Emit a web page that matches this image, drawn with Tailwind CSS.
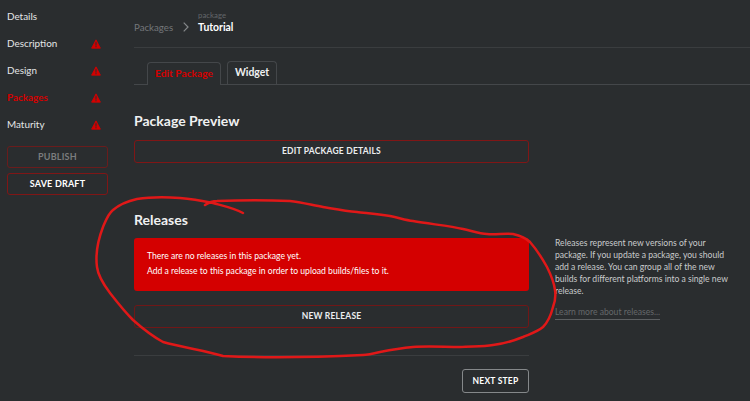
<!DOCTYPE html>
<html><head><meta charset="utf-8"><script src="https://cdn.jsdelivr.net/npm/@tailwindcss/browser@4"></script></head>
<body class="m-0 bg-[#2a2d2f]">
<div class="relative flex w-[750px] h-[401px] overflow-hidden bg-[#2a2d2f] font-['Lato',sans-serif] text-[#e4e6e7]">
  <aside class="w-[134px] shrink-0 pl-[7px] pt-[3px]">
    <div class="w-[101px]">
      <div class="h-[27px] flex items-center justify-between text-[9.9px]"><span>Details</span></div>
      <div class="h-[27px] flex items-center justify-between text-[9.9px]"><span>Description</span><svg class="w-[10px] h-[10px] mr-[7px]" viewBox="0 0 12 12"><path fill="#d40000" stroke="#d40000" stroke-linejoin="round" d="M6 1 11.3 11H.7Z"/><path fill="#2a2d2f" d="M5.3 4h1.4l-.2 4h-1ZM5.3 8.8h1.4V10H5.3Z"/></svg></div>
      <div class="h-[27px] flex items-center justify-between text-[9.9px]"><span>Design</span><svg class="w-[10px] h-[10px] mr-[7px]" viewBox="0 0 12 12"><path fill="#d40000" stroke="#d40000" stroke-linejoin="round" d="M6 1 11.3 11H.7Z"/><path fill="#2a2d2f" d="M5.3 4h1.4l-.2 4h-1ZM5.3 8.8h1.4V10H5.3Z"/></svg></div>
      <div class="h-[27px] flex items-center justify-between text-[9.9px] font-bold text-[#d40000]"><span>Packages</span><svg class="w-[10px] h-[10px] mr-[7px]" viewBox="0 0 12 12"><path fill="#d40000" stroke="#d40000" stroke-linejoin="round" d="M6 1 11.3 11H.7Z"/><path fill="#2a2d2f" d="M5.3 4h1.4l-.2 4h-1ZM5.3 8.8h1.4V10H5.3Z"/></svg></div>
      <div class="h-[27px] flex items-center justify-between text-[9.9px]"><span>Maturity</span><svg class="w-[10px] h-[10px] mr-[7px]" viewBox="0 0 12 12"><path fill="#d40000" stroke="#d40000" stroke-linejoin="round" d="M6 1 11.3 11H.7Z"/><path fill="#2a2d2f" d="M5.3 4h1.4l-.2 4h-1ZM5.3 8.8h1.4V10H5.3Z"/></svg></div>
      <button class="mt-[8px] w-full h-[22px] rounded-[3px] border border-[#6a1c1c] text-[9px] font-bold tracking-[.2px] text-[#7b7d7e]">PUBLISH</button>
      <button class="mt-[5px] w-full h-[22px] rounded-[3px] border border-[#801616] text-[9px] font-bold tracking-[.2px] text-white">SAVE DRAFT</button>
    </div>
  </aside>
  <main class="flex-1 min-w-0">
    <header class="h-[48px] border-b border-[#3a3d3f] flex items-start">
      <span class="mt-[18px] text-[9.7px] leading-[18px] text-[#74777a]">Packages</span>
      <svg class="mt-[22px] ml-[10px] w-[6px] h-[10px]" viewBox="0 0 6 10" fill="none" stroke="#85888a" stroke-width="1.2"><path d="M.7.7 5 5 .7 9.3"/></svg>
      <div class="ml-[9px] mt-[10px] flex flex-col">
        <span class="text-[7.8px] leading-[10px] text-[#63666a]">package</span>
        <span class="text-[10.4px] leading-[14px] font-bold text-white">Tutorial</span>
      </div>
    </header>
    <div class="mt-[14px] h-[23px] border-b border-[#44474a] flex pl-[13px] gap-[6px] items-end">
      <div class="relative top-[1px] h-[23px] w-[74px] rounded-t-[4px] border border-b-0 border-[#44474a] bg-[#2a2d2f] flex items-center justify-center text-[10.2px] font-bold text-[#d40000]">Edit Package</div>
      <div class="h-[23px] w-[50px] rounded-t-[4px] border border-b-0 border-[#44474a] flex items-center justify-center text-[10.4px] font-bold text-[#f0f1f2]">Widget</div>
    </div>
    <div class="flex">
      <div class="w-[395px] shrink-0">
        <h2 class="mt-[26px] h-[20px] leading-[20px] text-[14px] font-bold text-[#f0f1f2]">Package Preview</h2>
        <button class="mt-[9px] w-full h-[23px] rounded-[3px] border border-[#801616] text-[8.5px] font-bold tracking-[.2px] text-[#eceeef]">EDIT PACKAGE DETAILS</button>
        <h2 class="mt-[47px] h-[20px] leading-[20px] text-[14px] font-bold text-[#f0f1f2]">Releases</h2>
        <div class="mt-[8px] h-[53px] rounded-[3px] bg-[#d40000] px-[13px] pt-[11px] text-[8.6px] leading-[15px] text-white">
          <p>There are no releases in this package yet.</p>
          <p>Add a release to this package in order to upload builds/files to it.</p>
        </div>
        <button class="mt-[14px] w-full h-[23px] rounded-[3px] border border-[#701717] text-[8.5px] font-bold tracking-[.2px] text-[#eceeef]">NEW RELEASE</button>
        <div class="mt-[27px] border-t border-[#3a3d3f] flex justify-end pt-[13px]">
          <button class="w-[67px] h-[24px] rounded-[3px] border border-[#85888a] text-[8.5px] font-bold tracking-[.2px] text-white">NEXT STEP</button>
        </div>
      </div>
      <div class="ml-[26px] mt-[152px] w-[175px] text-[8.6px] leading-[12px] text-[#c9cbcc]">
        <p>Releases represent new versions of your package. If you update a package, you should add a release. You can group all of the new builds for different platforms into a single new release.</p>
        <a class="mt-[9px] inline-block border-b border-[#5c5f61] pb-[1px] text-[#65686a]">Learn more about releases...</a>
      </div>
    </div>
  </main>
  <svg class="absolute left-0 top-0 pointer-events-none" width="750" height="401" fill="none" stroke="#e01818" stroke-width="2.5" stroke-linecap="round" stroke-linejoin="round"><path d="M205 205C208 203 212 201 217 201C240 200 270 200 290 201C300 202 312 205 323 207C335 209 345 211 357 212C365 213 375 214 390 216C400 218 405 220 413 221C430 224 450 226 463 229C472 231 480 234 487 234C495 235 505 233 513 234C522 236 526 238 530 242C537 250 542 258 547 267C551 275 554 282 555 290C556 297 555 302 553 307C551 315 548 322 543 327C537 332 530 334 523 337C513 341 503 344 493 345C482 347 471 346 460 347C445 347 428 346 413 347C402 348 390 350 380 352C372 354 368 355 363 355C320 357 265 358 223 356C204 350 184 348 163 342C152 336 142 328 133 320C124 311 117 302 110 293C104 285 98 276 97 267C95 252 98 240 103 227C106 220 108 214 113 210C120 204 128 201 137 199C150 197 165 197 180 198C192 199 203 201 213 203C224 206 234 208 243 213"/></svg>
</div>
</body></html>
